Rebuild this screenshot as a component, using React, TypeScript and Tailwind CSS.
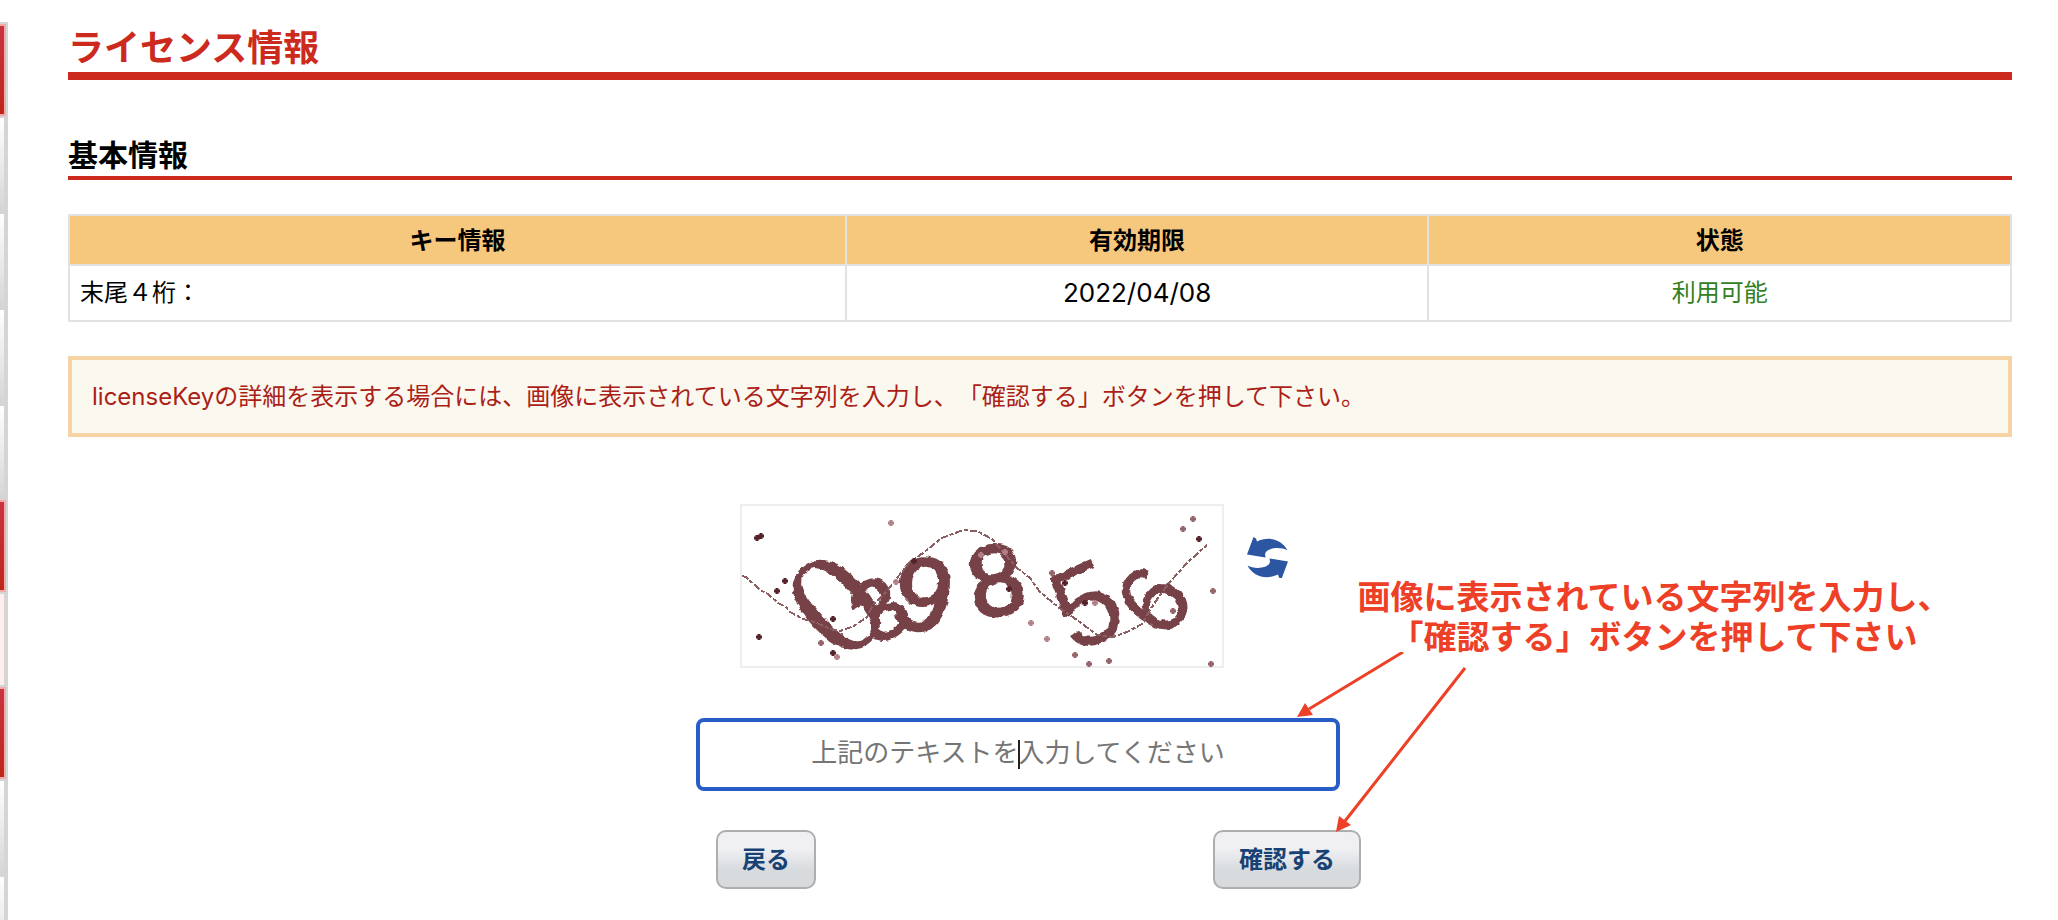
import { useState } from "react";

const menuItems = ["active", "plain", "plain", "plain", "last", "active", "selected", "active", "plain", "rest"];

const menuStyles: Record<string, string> = {
  active: "h-[92px] w-1.5 shrink-0 border-2 border-l-0 border-[#f5a9a9] bg-linear-to-b from-[#cb3340] to-[#bd2718]",
  plain: "h-[94px] w-1 shrink-0 bg-linear-to-b from-white to-[#d4d6d5]",
  last: "h-[92px] w-1 shrink-0 bg-linear-to-b from-white to-[#d4d6d5]",
  selected: "h-[91px] w-1 shrink-0 bg-[#ffeeee]",
  rest: "w-1 flex-1 bg-linear-to-b from-white to-[#ececec]",
};

const digits = [
  { char: "0", x: 92, y: 96, angle: -43, size: 150, font: "Liberation Sans Narrow", stroke: 0 },
  { char: "3", x: 137, y: 103, angle: -34, size: 88, font: "Liberation Sans", stroke: 2 },
  { char: "9", x: 181, y: 88, angle: 12, size: 104, font: "Liberation Sans", stroke: 3 },
  { char: "8", x: 254, y: 74, angle: -10, size: 100, font: "Liberation Sans", stroke: 3 },
  { char: "5", x: 344, y: 98, angle: -24, size: 116, font: "Liberation Sans", stroke: 0 },
  { char: "6", x: 411, y: 94, angle: -54, size: 98, font: "Liberation Sans", stroke: 1 },
];

const darkSpots = [[15, 32], [19, 30], [43, 75], [35, 85], [17, 131], [91, 147], [91, 113], [172, 55], [267, 83], [323, 77], [343, 97], [457, 33]];
const midSpots = [[79, 137], [333, 149], [347, 158], [367, 155], [469, 158], [471, 85], [431, 105], [441, 23], [451, 13], [310, 67]];
const lightSpots = [[149, 17], [95, 151], [154, 76], [239, 49], [263, 46], [353, 97], [289, 117], [305, 133]];

export default function App() {
  return (
    <div
      className="flex min-h-screen bg-white text-black font-[Inter,'Noto_Sans_CJK_JP',sans-serif] [text-spacing-trim:space-all]"
      lang="ja"
    >
      <SideMenu />
      <main className="min-w-0 flex-1 pl-[60px] pr-[46px] pt-5">
        <h1 className="h-[60px] border-b-8 border-[#cd2a1e] text-4xl leading-[56px] font-bold text-[#cd2a1e]">ライセンス情報</h1>
        <h2 className="mt-[52px] h-12 border-b-4 border-[#cd2a1e] text-3xl leading-[46px] font-bold">基本情報</h2>
        <LicenseTable />
        <p className="mt-[34px] border-4 border-[#f6d3a4] bg-[#fbf8f0] px-5 py-[18px] text-2xl leading-[37px] text-[#ab1f16]">
          licenseKeyの詳細を表示する場合には、画像に表示されている文字列を入力し、「確認する」ボタンを押して下さい。
        </p>
        <CaptchaForm />
      </main>
    </div>
  );
}

function SideMenu() {
  return (
    <aside className="flex w-2 shrink-0 flex-col pt-[22px]">
      <div className="flex flex-1 flex-col gap-0.5 bg-[#d5d5d5] pt-0.5">
        {menuItems.map((item, i) => (
          <div key={i} className={menuStyles[item]} />
        ))}
      </div>
    </aside>
  );
}

function LicenseTable() {
  return (
    <table className="mt-[34px] w-full table-fixed border-collapse border-2 border-[#e2e2e2] text-2xl">
      <thead>
        <tr className="h-[50px] bg-[#f6c87e]">
          <th className="w-[40%] border-2 border-[#e2e2e2] pt-0.5 leading-8 font-bold">キー情報</th>
          <th className="w-[30%] border-2 border-[#e2e2e2] pt-0.5 leading-8 font-bold">有効期限</th>
          <th className="w-[30%] border-2 border-[#e2e2e2] pt-0.5 leading-8 font-bold">状態</th>
        </tr>
      </thead>
      <tbody>
        <tr className="h-14">
          <td className="border-2 border-[#e2e2e2] px-2.5 leading-8">末尾４桁：</td>
          <td className="border-2 border-[#e2e2e2] text-center text-[26px] leading-8">2022/04/08</td>
          <td className="border-2 border-[#e2e2e2] text-center leading-8 text-[#338022]">利用可能</td>
        </tr>
      </tbody>
    </table>
  );
}

function CaptchaForm() {
  const [text, setText] = useState("");

  return (
    <form className="relative mx-auto mt-[67px] flex w-[648px] flex-col" onSubmit={(e) => e.preventDefault()}>
      <div className="flex items-start gap-[23px] pl-6">
        <CaptchaImage />
        <button type="button" aria-label="更新" className="mt-[33px]">
          <RefreshIcon />
        </button>
      </div>
      <div className="relative mt-[50px] -ml-5 mr-6">
        <input
          type="text"
          aria-label="上記のテキストを入力してください"
          placeholder="上記のテキストを入力してください"
          value={text}
          onChange={(e) => setText(e.target.value)}
          className="block h-[73px] w-full rounded-lg border-4 border-[#285dc8] bg-white px-4 pb-1 text-center text-[26px] placeholder-[#757575] outline-none"
        />
        <span className="pointer-events-none absolute top-[22px] left-1/2 h-[29px] w-0.5 bg-[#222]" />
      </div>
      <div className="mt-[39px] flex justify-between pr-[3px]">
        <FormButton type="button" label="戻る" />
        <FormButton type="submit" label="確認する" />
      </div>
      <Annotation />
    </form>
  );
}

function FormButton({ type, label }: { type: "button" | "submit"; label: string }) {
  return (
    <button
      type={type}
      className="h-[59px] rounded-[10px] border-2 border-[#aeaeae] bg-linear-to-b from-[#f0f0f3] from-30% to-[#d7dbde] to-70% px-6 text-2xl font-bold text-[#184274]"
    >
      {label}
    </button>
  );
}

function Annotation() {
  return (
    <div className="pointer-events-none absolute top-[73px] left-[641px] w-[594px] text-[#ee4026]">
      <p className="text-center text-[33px] leading-10 font-bold whitespace-nowrap">
        画像に表示されている文字列を入力し、
        <br />
        「確認する」ボタンを押して下さい
      </p>
      <svg className="absolute top-[75px] -left-[61px]" width="170" height="182" fill="currentColor" stroke="currentColor">
        <path d="M107 0L13 57M169 16L49 169" strokeWidth="3" />
        <path d="M1 65L9 51L17 63ZM40 180L43 164L55 173Z" stroke="none" />
      </svg>
    </div>
  );
}

function spotPath(spots: number[][]) {
  return spots.map(([x, y]) => `M${x - 3} ${y}h6M${x} ${y - 3}v6`).join("");
}

function CaptchaImage() {
  return (
    <svg
      viewBox="0 0 480 160"
      className="box-content h-[160px] w-[480px] overflow-visible border-2 border-[#eee]"
      role="img"
      aria-label="captcha"
    >
      <filter id="rough">
        <feTurbulence type="fractalNoise" baseFrequency="0.2" numOctaves="1" />
        <feDisplacementMap in="SourceGraphic" scale="5" xChannelSelector="R" yChannelSelector="G" />
      </filter>
      <g fill="#764247" stroke="#764247" filter="url(#rough)">
        {digits.map((d) => (
          <text
            key={d.char}
            fontFamily={d.font}
            fontSize={d.size}
            strokeWidth={d.stroke}
            textAnchor="middle"
            transform={`translate(${d.x} ${d.y}) rotate(${d.angle})`}
            dy="0.35em"
          >
            {d.char}
          </text>
        ))}
      </g>
      <polyline
        points="0,70 4,71 18,84 26,88 36,97 44,101 48,106 61,113 70,115 91,124 98,125 112,120 125,111 131,99 145,85 155,72 168,56 181,47 200,32 221,24 235,25 250,33 275,62 288,72 298,86 316,101 335,114 355,129 371,131 385,126 400,118 408,104 418,89 428,76 445,57 465,39"
        fill="none"
        stroke="#8b5e62"
        strokeWidth="2"
        strokeDasharray="7 2 4 2"
        shapeRendering="crispEdges"
      />
      <g fill="none" strokeWidth="3">
        <path d={spotPath(darkSpots)} stroke="#55222a" />
        <path d={spotPath(midSpots)} stroke="#94646b" />
        <path d={spotPath(lightSpots)} stroke="#b38088" />
      </g>
    </svg>
  );
}

function RefreshIcon() {
  return (
    <svg width="41" height="41" viewBox="0 0 41 41" fill="#2c55a2">
      <path d="M6.500 0L9 1.500L10 4.500C21 -1 35 2 40.500 13.500C33 9 19 11 18 17L18.500 20.500L0 17.500Z" />
      <path d="M6.500 0L9 1.500L10 4.500C21 -1 35 2 40.500 13.500C33 9 19 11 18 17L18.500 20.500L0 17.500Z" transform="rotate(180 20.500 21)" />
    </svg>
  );
}
